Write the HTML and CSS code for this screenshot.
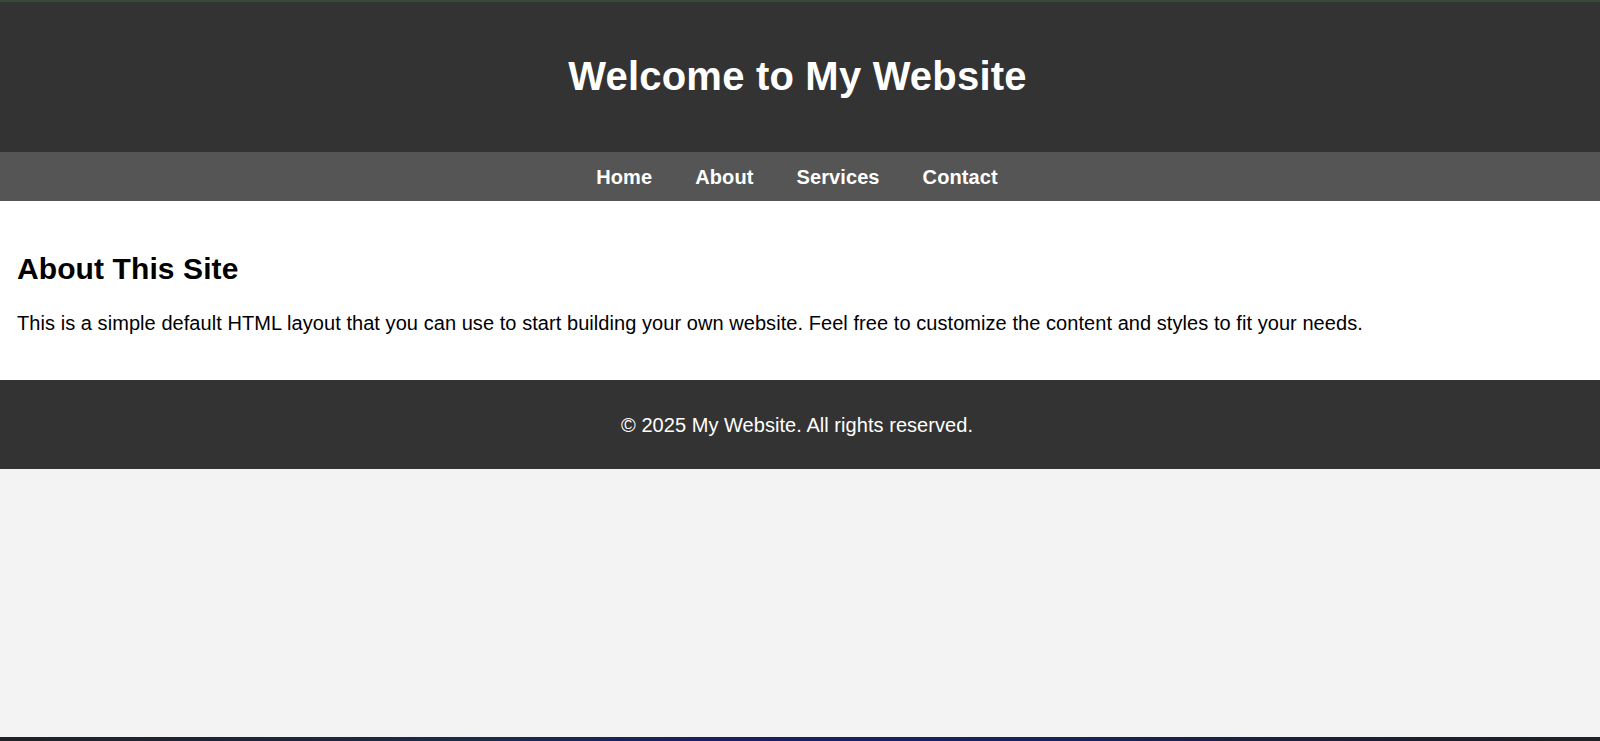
FILE: index.html
```html
<!DOCTYPE html>
<html lang="en">
<head>
<meta charset="UTF-8">
<title>My Website</title>
<link rel="stylesheet" href="styles.css">
</head>
<body>
<div class="page">
  <header class="site-header">
    <h1 class="site-title">Welcome to My Website</h1>
  </header>
  <nav class="site-nav">
    <a href="#" class="nav-link">Home</a>
    <a href="#" class="nav-link">About</a>
    <a href="#" class="nav-link">Services</a>
    <a href="#" class="nav-link">Contact</a>
  </nav>
  <main class="site-main">
    <h2 class="section-title">About This Site</h2>
    <p class="section-text">This is a simple default HTML layout that you can use to start building your own website. Feel free to customize the content and styles to fit your needs.</p>
  </main>
  <footer class="site-footer">
    <p class="footer-text">&copy; 2025 My Website. All rights reserved.</p>
  </footer>
  <div class="filler"></div>
  <div class="bottom-strip"></div>
</div>
</body>
</html>
```

FILE: styles.css
```css
html, body {
  margin: 0;
  padding: 0;
}

body {
  font-family: "Liberation Sans", Arial, sans-serif;
  background: #f3f3f3;
  color: #000;
}

.page {
  min-height: 100vh;
  display: flex;
  flex-direction: column;
}

.site-header {
  background: #333333;
  border-top: 2px solid #364a35;
  padding: 51px 5px 53px 0;
  text-align: center;
}

.site-title {
  margin: 0;
  color: #ffffff;
  font-size: 40px;
  font-weight: bold;
  line-height: 46px;
  letter-spacing: 0.2px;
}

.site-nav {
  background: #555555;
  display: flex;
  justify-content: center;
  gap: 43px;
  padding: 14px 6px 12px 0;
}

.nav-link {
  color: #ffffff;
  text-decoration: none;
  font-weight: bold;
  font-size: 20px;
  line-height: 23px;
  letter-spacing: 0.1px;
}

.site-main {
  background: #ffffff;
  padding: 50px 17px 45px;
}

.section-title {
  margin: 0 0 26px;
  font-size: 30px;
  font-weight: bold;
  line-height: 35px;
  letter-spacing: 0.1px;
}

.section-text {
  margin: 0;
  font-size: 20px;
  line-height: 23px;
  letter-spacing: 0.06px;
}

.site-footer {
  background: #333333;
  padding: 34px 6px 32px 0;
  text-align: center;
}

.footer-text {
  margin: 0;
  color: #ffffff;
  font-size: 20px;
  line-height: 23px;
  letter-spacing: 0.05px;
}

.filler {
  flex: 1;
}

.bottom-strip {
  height: 4px;
  background: linear-gradient(90deg, #1e2228 0%, #1a2a4a 30%, #18205e 45%, #16245a 65%, #1c1f2e 90%, #1e2228 100%);
}
```
